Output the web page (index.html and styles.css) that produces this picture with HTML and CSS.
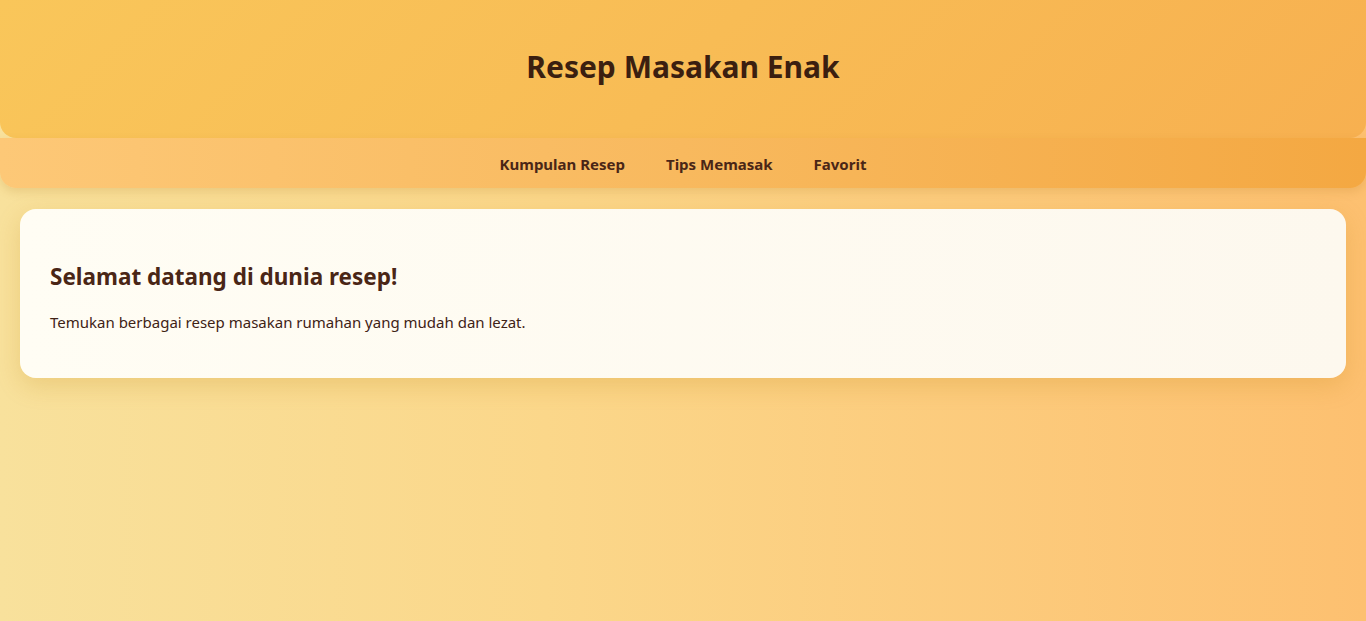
FILE: index.html
```html
<!DOCTYPE html>
<html lang="id">
<head>
<meta charset="utf-8">
<title>Resep Masakan Enak</title>
<link rel="stylesheet" href="styles.css">
</head>
<body>
<header class="site-header">
  <h1 class="site-title">Resep Masakan Enak</h1>
</header>
<nav class="site-nav">
  <a href="#" class="nav-link">Kumpulan Resep</a>
  <a href="#" class="nav-link">Tips Memasak</a>
  <a href="#" class="nav-link">Favorit</a>
</nav>
<main class="content">
  <section class="card">
    <h2 class="card-title">Selamat datang di dunia resep!</h2>
    <p class="card-text">Temukan berbagai resep masakan rumahan yang mudah dan lezat.</p>
  </section>
</main>
</body>
</html>
```

FILE: styles.css
```css
html, body {
  margin: 0;
  padding: 0;
}
body {
  min-height: 621px;
  font-family: "Noto Sans", "Open Sans", sans-serif;
  color: #4a2616;
  background: linear-gradient(90deg, #f8e19c 0%, #fbd78a 40%, #fdc070 100%);
}
.site-header {
  background: linear-gradient(135deg, #f9c65a 0%, #f8bc55 50%, #f7b050 100%);
  border-radius: 0 0 16px 16px;
  padding: 46px 0 50px;
  text-align: center;
}
.site-title {
  margin: 0;
  font-size: 30px;
  line-height: 42px;
  font-weight: 700;
  color: #3b1f10;
}
.site-nav {
  display: flex;
  justify-content: center;
  align-items: center;
  gap: 41px;
  height: 50px;
  background: linear-gradient(90deg, #fdc877 0%, #f8b95e 50%, #f4a842 100%);
  border-radius: 0 0 16px 16px;
  box-shadow: 0 4px 10px rgba(170, 110, 20, 0.18);
}
.nav-link {
  font-size: 15px;
  line-height: 20px;
  padding-top: 2px;
  font-weight: 700;
  color: #4a2616;
  text-decoration: none;
}
.content {
  padding: 21px 20px;
}
.card {
  background: linear-gradient(90deg, #fffdf4 0%, #fdf8ee 100%);
  border-radius: 16px;
  padding: 52px 30px 44px;
  box-shadow: 0 8px 24px rgba(190, 130, 20, 0.22);
}
.card-title {
  margin: 0 0 17px;
  font-size: 22.5px;
  line-height: 32px;
  font-weight: 700;
  color: #4a2616;
}
.card-text {
  margin: 0;
  font-size: 15px;
  line-height: 24px;
  color: #3f2316;
}
```
